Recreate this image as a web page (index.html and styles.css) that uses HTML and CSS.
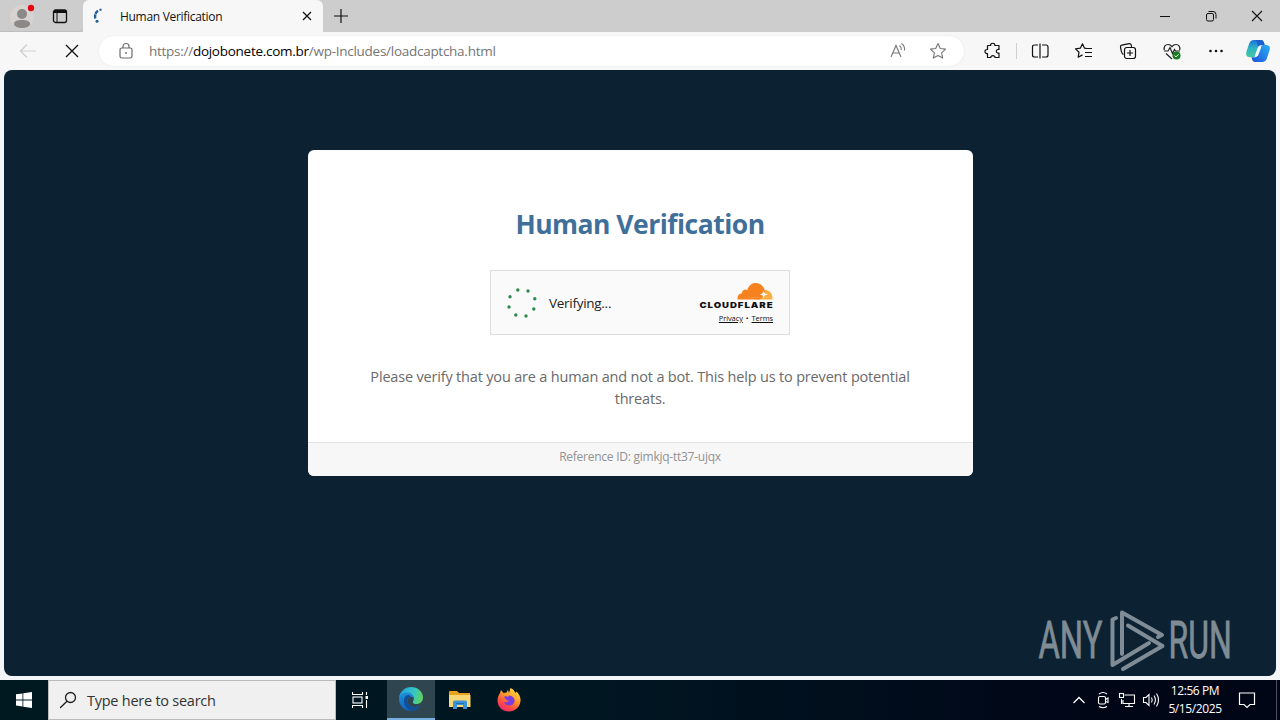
FILE: index.html
```html
<!DOCTYPE html>
<html lang="en">
<head>
  <meta charset="UTF-8">
  <meta name="viewport" content="width=device-width, initial-scale=1.0">
  <title>Human Verification</title>
  <link rel="stylesheet" href="styles.css">
</head>
<body>

  <!-- Tab strip -->
  <div class="tab-strip">
    <div class="tab-tools">
      <svg class="profile" width="26" height="28" viewBox="0 0 26 28">
        <circle cx="13" cy="15" r="12" fill="#d6d3d1"/>
        <circle cx="13" cy="12" r="5" fill="#8b8987"/>
        <path d="M5 22c0-3 3-4 8-4s8 1 8 4c0 2.500-4 4-8 4s-8-1.500-8-4z" fill="#8b8987"/>
        <circle cx="22" cy="6" r="3.200" fill="#e30613"/>
      </svg>
      <svg class="tab-menu" width="16" height="16" viewBox="0 0 16 16" fill="none" stroke="#111">
        <rect x="1.500" y="2" width="13" height="12.500" rx="2" stroke-width="1.300"/>
        <path d="M2 3.500h12" stroke-width="3"/>
        <path d="M5 4v10" stroke-width="1"/>
      </svg>
    </div>
    <div class="tab">
      <svg width="14" height="16" viewBox="0 0 14 16" fill="none" stroke="#1f6199" stroke-width="2.400">
        <path d="M3.200 10.500C2.600 6.500 4 3.700 6.500 2.500" stroke-dasharray="4 .6"/>
        <path d="M7.500 2l2-.4" stroke-width="2"/>
        <circle cx="5" cy="13.300" r="1.500" fill="#1f6199" stroke="none"/>
      </svg>
      <span class="tab-title">Human Verification</span>
      <svg class="tab-close" width="10" height="10" viewBox="0 0 10 10" stroke="#111" stroke-width="1.300"><path d="M1 1l8 8M9 1L1 9"/></svg>
    </div>
    <svg class="new-tab" width="14" height="14" viewBox="0 0 14 14" stroke="#111" stroke-width="1.200"><path d="M0 7h14M7 0v14"/></svg>
    <div class="window-buttons">
      <svg width="12" height="12" viewBox="0 0 12 12" stroke="#111"><path d="M1 6.500h10"/></svg>
      <svg width="12" height="12" viewBox="0 0 12 12" fill="none" stroke="#111">
        <rect x="1.500" y="3.500" width="7" height="7.500" rx="1.500"/>
        <path d="M3.500 1.500h4.500q3 0 3 3v4"/>
      </svg>
      <svg width="12" height="12" viewBox="0 0 12 12" stroke="#111" stroke-width="1.100"><path d="M1 1l10 10M11 1L1 11"/></svg>
    </div>
  </div>

  <!-- Address bar -->
  <div class="toolbar">
    <svg class="back" width="24" height="24" viewBox="0 0 24 24" fill="none" stroke="#cfcfcf" stroke-width="1.200"><path d="M20 12H4.500M11 5.500L4.500 12l6.500 6.500"/></svg>
    <svg class="stop" width="24" height="24" viewBox="0 0 24 24" stroke="#111" stroke-width="1.300"><path d="M6 6l12 12M18 6L6 18"/></svg>
    <div class="address">
      <svg width="16" height="18" viewBox="0 0 16 18" fill="none" stroke="#6b6b6b" stroke-width="1.200">
        <rect x="2" y="6" width="12" height="10" rx="1.800"/>
        <path d="M5 6V4.500a3 3 0 0 1 6 0V6"/>
        <circle cx="8" cy="11" r=".9" fill="#6b6b6b" stroke="none"/>
      </svg>
      <span class="url">https://<b>dojobonete.com.br</b>/wp-Includes/loadcaptcha.html</span>
      <svg class="read-aloud" width="18" height="18" viewBox="0 0 18 18" fill="none" stroke="#777" stroke-width="1.100">
        <path d="M2 15L7 3.500 12 15M3.800 11h6.500"/>
        <path d="M10.500 3.500q2.100 1.500 1.800 4.500M12.500 1.500q3.600 2.500 3 7"/>
      </svg>
      <svg class="star" width="18" height="18" viewBox="0 0 18 18" fill="none" stroke="#777" stroke-width="1.100" stroke-linejoin="round">
        <path d="M9 1.500l2.300 5 5.200.6-3.900 3.700 1.100 5.300L9 13.500l-4.700 2.600 1.100-5.300L1.500 7.100l5.200-.6z"/>
      </svg>
    </div>
    <div class="actions">
      <svg width="24" height="24" viewBox="0 0 24 24" fill="none" stroke="#111" stroke-width="1.200" stroke-linejoin="round">
        <path d="M7 6.500h2.600c-.4-3 4.700-3 4.300 0H18v4c-3.600-.7-3.600 4.200 0 3.500v4.500h-4c.4-2.400-4.600-2.400-4.200 0H6.500v-4c-3.400.5-3.400-4.400 0-4V7q0-.5.500-.5z"/>
      </svg>
      <i class="divider"></i>
      <svg width="24" height="24" viewBox="0 0 24 24" fill="none" stroke="#111" stroke-width="1.200">
        <path d="M10 6H6.500Q4.500 6 4.500 8v8q0 2 2 2H10M14 6h4q2 0 2 2v8q0 2-2 2h-4M12 4.500v15"/>
      </svg>
      <svg width="24" height="24" viewBox="0 0 24 24" fill="none" stroke="#111" stroke-width="1.200" stroke-linejoin="round">
        <path d="M15 9.500l-2.500-.3L10.500 4.800 8.300 9.200l-4.800.7 3.500 3.400-.8 4.900 4.300-2.300"/>
        <path d="M13.500 9.500H20M13 13.500h7M13 17.500h7"/>
      </svg>
      <svg width="24" height="24" viewBox="0 0 24 24" fill="none" stroke="#111" stroke-width="1.200">
        <path d="M7.500 15.500C6 15 5.700 13.500 5.300 12L4.500 8.300q-.3-1.700 1.200-2.100l7.500-1.500q1.600-.2 2 1.200l.4 2"/>
        <rect x="8.500" y="8.500" width="11" height="11" rx="2.200"/>
        <path d="M14 11v6M11 14h6"/>
      </svg>
      <svg width="24" height="24" viewBox="0 0 24 24" fill="none" stroke="#222" stroke-width="1.200">
        <path d="M4.300 11C3.500 7.500 5.500 5.500 8 5.500q2.500 0 4 2.200 1.500-2.200 4-2.200c2.700 0 4.500 2.300 3.700 5.500M6 14.500l6 5.500"/>
        <path d="M4 12h4l2-3.500 2.500 6 2-4 1 1.500H20"/>
        <circle cx="16.500" cy="16.500" r="4" fill="#187a1e" stroke="none"/>
        <path d="M14.600 16.600l1.400 1.300 2.500-2.600" stroke="#fff" stroke-width="1"/>
      </svg>
      <svg width="24" height="24" viewBox="0 0 24 24" fill="#111"><circle cx="6.500" cy="12" r="1.300"/><circle cx="12" cy="12" r="1.300"/><circle cx="17.500" cy="12" r="1.300"/></svg>
      <svg class="copilot" width="26" height="26" viewBox="0 0 26 26">
        <defs>
          <linearGradient id="cpA" x1="0" y1="0" x2="0" y2="1"><stop offset="0" stop-color="#1c74d8"/><stop offset=".5" stop-color="#2fb6c4"/><stop offset="1" stop-color="#45c7a0"/></linearGradient>
          <linearGradient id="cpB" x1="1" y1="0" x2="0" y2="1"><stop offset="0" stop-color="#2cb2f2"/><stop offset="1" stop-color="#1c50d8"/></linearGradient>
        </defs>
        <path d="M9 2h7q2 0 2.800 2.300L19.700 7H16q-2 0-2.700 2l-2.500 8q-.8 2.300-3 2.300H4.500Q.2 19 1.300 14L4 6q1.200-4 5-4z" fill="url(#cpA)"/>
        <path d="M17 24h-7q-2 0-2.800-2.300l-.7-2.500H10q2 0 2.700-2l2.500-8q.8-2.300 3-2.300h3.300q4.300.3 3.200 5L22 20q-1.200 4-5 4z" fill="url(#cpB)"/>
        <path d="M11 2h5q2 0 2.800 2.300L19.700 7H16q-2 0-2.700 2z" fill="#1a5fd0"/>
        <path d="M13.300 8.500h3.200l-3.600 9.500H9.700z" fill="#f4f8fb"/>
      </svg>
    </div>
  </div>

  <!-- Page -->
  <div class="frame">
    <main class="page">
      <section class="card">
        <div class="card-body">
          <h1>Human Verification</h1>
          <div class="widget">
            <svg class="spinner" width="32" height="32" viewBox="0 0 32 32" fill="#2c8a4e">
              <circle cx="11.800" cy="3" r="1.700"/><circle cx="22" cy="4" r="1.700"/>
              <circle cx="28.800" cy="11.800" r="1.700"/><circle cx="27.800" cy="22" r="1.700"/>
              <circle cx="20" cy="29" r="1.700"/><circle cx="9.800" cy="28" r="1.700"/>
              <circle cx="3" cy="20" r="1.700"/><circle cx="4" cy="9.800" r="1.700"/>
            </svg>
            <span class="status">Verifying...</span>
            <div class="brand">
              <svg width="76" height="28" viewBox="0 0 76 28">
                <path d="M58 17.500l2-4c.5-3.500 3.500-6 7.500-5.500 4 .3 7 3.700 7 8v1.500z" fill="#fbad41"/>
                <path d="M39.500 17.500c-.5-3.500 1.500-6 4.500-6.300-.2-3 3-4.500 5.300-3C50.500 3.500 54 .8 58 1c5 .3 8.500 4 9 9l-2 4.500q-.5 1.200-2 1.300L46 15.500l17 .6-1 1.400z" fill="#f6821f"/>
                <path d="M65.500 8.500l1.300 3 3.200.8-3.200 1-1.300 3.200-1-3.200-3-.8 3-1z" fill="#fff"/>
                <text class="wordmark" x="1.500" y="26" textLength="74" lengthAdjust="spacingAndGlyphs">CLOUDFLARE</text>
              </svg>
              <div class="links"><a href="#">Privacy</a><span>•</span><a href="#">Terms</a></div>
            </div>
          </div>
          <p>Please verify that you are a human and not a bot. This help us to prevent potential<br>threats.</p>
        </div>
        <div class="card-footer">Reference ID: gimkjq-tt37-ujqx</div>
      </section>

      <!-- Watermark -->
      <svg class="watermark" width="204" height="68" viewBox="0 0 204 68">
        <text transform="translate(1.500 51) scale(.63 1)">ANY</text>
        <g fill="none" stroke-linejoin="round" stroke-linecap="round">
          <path d="M79 11l-3.500 1.500V58L112 36"/>
          <path d="M85 47V5.500L125 28l-4 2"/>
          <path d="M91 18.500L125.500 39 86 62"/>
        </g>
        <text transform="translate(131.500 51) scale(.615 1)">RUN</text>
      </svg>
    </main>
  </div>

  <!-- Taskbar -->
  <div class="taskbar">
    <div class="start">
      <svg width="16" height="16" viewBox="0 0 16 16" fill="#fff"><path d="M0 2.300l6.500-.9v6.100H0zM7.300 1.300L16 0v7.500H7.300zM0 8.400h6.500v6.100L0 13.600zM7.300 8.400H16V16l-8.700-1.300z"/></svg>
    </div>
    <div class="search">
      <svg width="18" height="18" viewBox="0 0 18 18" fill="none" stroke="#222" stroke-width="1.300"><circle cx="10.500" cy="6.500" r="5"/><path d="M7 10.200L0 17"/></svg>
      <span>Type here to search</span>
    </div>
    <div class="app">
      <svg width="18" height="18" viewBox="0 0 18 18" fill="none" stroke="#fff" stroke-width="1.100">
        <path d="M.5 1v2.500h10V1M.5 17v-2.500h10V17M14.500 1v3M14.500 9v8"/><rect x="1" y="6" width="9" height="6"/>
        <rect x="13.500" y="5" width="2.500" height="3" fill="#fff" stroke="none"/>
      </svg>
    </div>
    <div class="app active">
      <svg width="26" height="26" viewBox="0 0 26 26">
        <defs>
          <linearGradient id="edA" x1="0" y1=".3" x2="1" y2=".5"><stop offset="0" stop-color="#209fdc"/><stop offset=".6" stop-color="#36c6c3"/><stop offset="1" stop-color="#5fd35c"/></linearGradient>
          <linearGradient id="edB" x1="0" y1="0" x2="0" y2="1"><stop offset="0" stop-color="#1b91dc"/><stop offset="1" stop-color="#1560b8"/></linearGradient>
        </defs>
        <path d="M1 12C2 5 7 1 13 1c7 0 12 5 12 10.500 0 4-3 6.500-6.500 6.500-3 0-4.300-1.300-3.500-2.600 2-3 .5-7.400-5-7.400-4 0-7 1.500-9 4z" fill="url(#edA)"/>
        <path d="M1 13c0-4 4-6.500 8-6.500 3.500 0 6 2 6.300 4.800C12 10 9.500 12 9.500 15c0 4 4.500 7 9.500 5.800l3-1.200C20 23 17 25 13 25 6 25 1 20 1 13z" fill="url(#edB)"/>
        <path d="M8 9.500c-4 4-2 13 5 15.500 4 0 7-2 9-5.400-7 3.400-12.500-.1-12.500-4.600 0-2.500 1.500-4 3.500-4.300-1-1.700-3-2.200-5-1.200z" fill="#124f96"/>
      </svg>
    </div>
    <div class="app">
      <svg width="24" height="20" viewBox="0 0 24 20">
        <path d="M1 2q0-1 1-1h7l2 2h11v4H1z" fill="#e8a21c"/>
        <path d="M1 5h21q.5 0 .5.500V17H1z" fill="#f8d775"/>
        <path d="M5 19v-7q0-1.500 1.500-1.500h11q1.500 0 1.500 1.500v7h-4v-4H9v4z" fill="#3c93d6"/>
        <path d="M8 13.500h8" stroke="#1f6fb5"/>
      </svg>
    </div>
    <div class="app">
      <svg width="26" height="26" viewBox="0 0 26 26">
        <defs><linearGradient id="ffA" x1=".8" y1="0" x2=".2" y2="1"><stop offset="0" stop-color="#ffe34a"/><stop offset=".4" stop-color="#ff9a28"/><stop offset=".75" stop-color="#fb4447"/><stop offset="1" stop-color="#e5267c"/></linearGradient></defs>
        <path d="M4 6l1-3 2.500 3 3-.5L12 3l1 3 1.500-5c3 1.200 4 3.200 5 5l1-1.500C23 7 25 10.500 24.500 14c-.5 6-5.500 10.500-11.500 10.500C6.500 24.500 1.500 20 1.500 13.500 1.500 11 2.500 8 4 6z" fill="url(#ffA)"/>
        <path d="M8 10c1-1 3-.8 4 0l1-1.500c4 .5 6 3 5.500 6-.5 2.700-3 4-5.500 4s-4.500-1.500-5-3.500c2 1 4 0 5-1.500-2 0-3-.5-5-3.500z" fill="#7a3be0"/>
      </svg>
    </div>

    <div class="tray">
      <svg width="24" height="18" viewBox="0 0 24 18" fill="none" stroke="#fff" stroke-width="1.300"><path d="M6.500 12L12 6.500l5.500 5.500"/></svg>
      <svg width="24" height="18" viewBox="0 0 24 18" fill="none" stroke="#fff" stroke-width="1.100">
        <rect x="7.500" y="5.500" width="7" height="7.500" rx="1.500"/><path d="M14.500 8.500L17 7v4.500l-2.500-1M8 3q4-3 8 0M8 15.500q4 2.500 8 0"/>
      </svg>
      <svg width="24" height="18" viewBox="0 0 24 18" fill="none" stroke="#fff" stroke-width="1.100">
        <path d="M9.500 4H19.500v8.500H8V9M14 12.500V15.500M10 15.500h8M6.500 8v5"/><rect x="4.500" y="2.500" width="4" height="4"/>
      </svg>
      <svg width="24" height="18" viewBox="0 0 24 18" fill="none" stroke="#fff" stroke-width="1.100">
        <path d="M4.500 6.500H7L10 3.500v11L7 11.500H4.500zM12.500 6.500q1.500 2.500 0 5M15 4.500q2.800 4.500 0 9M17.500 2.500q4 6.500 0 13"/>
      </svg>
      <div class="clock"><span>12:56 PM</span><span>5/15/2025</span></div>
      <svg class="notify" width="18" height="18" viewBox="0 0 18 18" fill="none" stroke="#fff" stroke-width="1.200"><path d="M1.500 2h15v11.500H12l-3 3-3-3H1.500z"/></svg>
      <i class="peek"></i>
    </div>
  </div>

</body>
</html>
```
FILE: styles.css
```css
* {
  box-sizing: border-box;
}

body {
  margin: 0;
  width: 1280px;
  height: 720px;
  display: flex;
  flex-direction: column;
  overflow: hidden;
  background-color: #f7f7f7;
  font-family: "Open Sans", "Noto Sans", sans-serif;
}

svg {
  display: block;
  flex: none;
}

/* Tab strip */
.tab-strip {
  display: flex;
  align-items: center;
  height: 32px;
  background-color: #cdcdcd;
}

.tab-tools {
  display: flex;
  align-items: center;
  width: 83px;
  height: 32px;
  padding-left: 9px;
  border-bottom: 1px solid #bdbdbd;
  border-bottom-right-radius: 4px;
}

.tab-menu {
  margin-left: 17px;
}

.tab {
  display: flex;
  align-items: center;
  width: 240px;
  height: 32px;
  padding: 0 11px 0 9px;
  background-color: #f7f7f7;
  border-radius: 6px 6px 0 0;
}

.tab-title {
  margin-left: 14px;
  font-size: 12px;
  letter-spacing: -0.3px;
  color: #111;
  white-space: nowrap;
}

.tab-close {
  margin-left: auto;
}

.new-tab {
  margin-left: 11px;
}

.window-buttons {
  display: flex;
  gap: 34px;
  margin-left: auto;
  padding-right: 17px;
}

/* Address bar */
.toolbar {
  display: flex;
  align-items: center;
  height: 38px;
  padding: 0 9px 0 16px;
  background-color: #f7f7f7;
}

.stop {
  margin-left: 20px;
}

.address {
  display: flex;
  align-items: center;
  width: 865px;
  height: 30px;
  margin-left: 15px;
  padding: 0 17px 0 19px;
  border-radius: 15px;
  background-color: #fff;
  box-shadow: 0 0 2px #e4e4e4;
}

.url {
  margin-left: 15px;
  font-size: 13.500px;
  letter-spacing: -0.27px;
  color: #757575;
  white-space: nowrap;
}

.url b {
  font-weight: normal;
  color: #000;
}

.read-aloud {
  margin-left: auto;
}

.star {
  margin-left: 22px;
}

.actions {
  display: flex;
  align-items: center;
  gap: 20px;
  margin-left: auto;
}

.divider {
  width: 1px;
  height: 16px;
  margin: 0 -9px 0 -9px;
  background-color: #cfcfcf;
}

.copilot {
  margin-left: -3px;
}

/* Page */
.frame {
  height: 610px;
  padding: 0 4px 4px;
  background-color: #f3f5f8;
}

.page {
  position: relative;
  height: 606px;
  padding-top: 80px;
  border-radius: 8px;
  background-color: #0c2233;
}

.card {
  width: 665px;
  height: 326px;
  margin: 0 auto;
  border-radius: 6px;
  background-color: #fff;
  overflow: hidden;
  text-align: center;
}

.card-body {
  height: 292px;
  padding-top: 54px;
}

h1 {
  margin: 0;
  font-size: 26.500px;
  line-height: 40px;
  letter-spacing: -0.52px;
  color: #40709a;
}

.widget {
  display: flex;
  align-items: center;
  width: 300px;
  height: 65px;
  margin: 26px auto 0;
  padding: 0 15px;
  border: 1px solid #dedede;
  background-color: #fafafa;
}

.status {
  margin-left: 11px;
  font-size: 13.500px;
  letter-spacing: -0.28px;
  color: #222;
}

.brand {
  margin-left: auto;
}

.wordmark {
  font-family: Inter, "Open Sans", sans-serif;
  font-size: 8px;
  font-weight: 900;
  letter-spacing: 0.8px;
  fill: #111;
}

.links {
  display: flex;
  justify-content: flex-end;
  gap: 3px;
  padding-right: 1px;
  margin-top: 3px;
  font-size: 7.500px;
  line-height: 10px;
  letter-spacing: -0.1px;
  color: #111;
}

.links a {
  color: #111;
}

.card p {
  margin: 31px 0 0;
  font-size: 14.500px;
  line-height: 22px;
  letter-spacing: -0.18px;
  color: #6a6a6a;
}

.card-footer {
  height: 34px;
  border-top: 1px solid #e4e4e4;
  background-color: #f7f7f7;
  font-size: 12px;
  line-height: 28px;
  letter-spacing: -0.25px;
  color: #929292;
}

.watermark {
  position: absolute;
  right: 35px;
  bottom: 1px;
  fill: #7f8c95;
  stroke: #7f8c95;
  stroke-width: 4;
}

.watermark text {
  font-family: "Roboto", sans-serif;
  font-size: 52px;
  stroke: #7f8c95;
  stroke-width: 0.8;
}

/* Taskbar */
.taskbar {
  display: flex;
  height: 40px;
  background: linear-gradient(to right, #001820, #001722 45%, #010617 85%);
}

.start,
.app {
  display: flex;
  align-items: center;
  justify-content: center;
  width: 48px;
}

.start,
.search,
.tray {
  height: 40px;
}

.search {
  display: flex;
  align-items: center;
  width: 288px;
  margin-right: 1px;
  padding-left: 11px;
  border: 1px solid #bbb;
  background-color: #f0f0f0;
  font-size: 14.500px;
  letter-spacing: -0.25px;
  color: #333;
}

.search span {
  margin-left: 9px;
}

.app + .app {
  margin-left: 1px;
}

.app.active {
  margin-left: 2px;
  border-bottom: 2px solid #76aee0;
  background-color: #2f454f;
}

.tray {
  display: flex;
  align-items: center;
  margin-left: auto;
}

.clock {
  width: 64px;
  text-align: center;
  font-size: 12px;
  line-height: 18px;
  letter-spacing: -0.4px;
  color: #fff;
}

.clock span {
  display: block;
}

.notify {
  margin: 0 20px 0 11px;
}

.peek {
  width: 1px;
  height: 40px;
  margin-right: 3px;
  background-color: #4a5260;
}
```
